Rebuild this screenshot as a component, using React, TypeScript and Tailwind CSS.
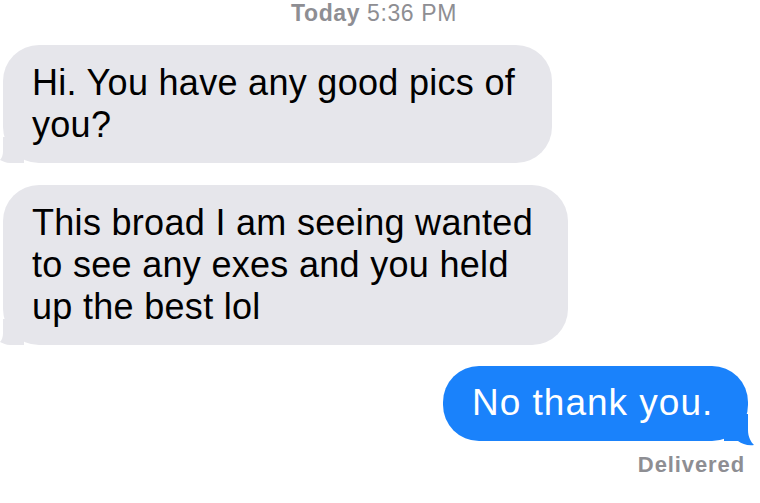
import React from "react";

const font = { fontFamily: '"Liberation Sans", Arial, sans-serif' };

function GrayTail() {
  return (
    <svg
      className="absolute left-[-3px] bottom-0"
      width="24"
      height="26"
      viewBox="0 0 24 26"
    >
      <path
        d="M3 0 H24 V26 H10 C6 26 3 24 0 23 C2 21 3 18 3 14 Z"
        fill="#e6e6eb"
      />
    </svg>
  );
}

export default function App() {
  return (
    <div
      className="w-[760px] h-[503px] bg-white overflow-hidden flex flex-col"
      style={font}
    >
      <div className="h-[45px] flex justify-center pr-[12px]">
        <span className="text-[23px] leading-[26px] text-[#8e8e93] tracking-[0.6px]">
          <span className="font-bold">Today</span> 5:36 PM
        </span>
      </div>

      <div className="relative ml-[3px] w-[549px] bg-[#e6e6eb] rounded-[36px] pl-[29px] pr-[28px] pt-[17px] pb-[17px]">
        <p className="text-[36px] leading-[42px] text-black tracking-[0.3px]">
          Hi. You have any good pics of you?
        </p>
        <GrayTail />
      </div>

      <div className="relative ml-[3px] mt-[22px] w-[565px] bg-[#e6e6eb] rounded-[36px] pl-[29px] pr-[26px] pt-[17px] pb-[17px]">
        <p className="text-[36px] leading-[42px] text-black tracking-[0.3px]">
          This broad I am seeing wanted to see any exes and you held up the best lol
        </p>
        <GrayTail />
      </div>

      <div className="flex justify-end pr-[12px] mt-[21px]">
        <div className="relative w-[305px] bg-[#1a82fb] rounded-[36px] pl-[29px] pt-[16px] pb-[17px]">
          <p className="text-[37px] leading-[42px] text-white tracking-[1px] whitespace-nowrap">
            No thank you.
          </p>
          <svg
            className="absolute right-[-6px] bottom-[-5px]"
            width="30"
            height="32"
            viewBox="0 0 30 32"
          >
            <path
              d="M0 0 H24 V16 C24 23 27 28 30 31 C24 32 18 30 14 27 C10 27 6 27 0 27 Z"
              fill="#1a82fb"
            />
          </svg>
        </div>
      </div>

      <div className="flex justify-end pr-[15px] mt-[11px]">
        <span className="text-[22px] leading-[25px] font-bold text-[#8e8e93] tracking-[0.9px]">
          Delivered
        </span>
      </div>
    </div>
  );
}
